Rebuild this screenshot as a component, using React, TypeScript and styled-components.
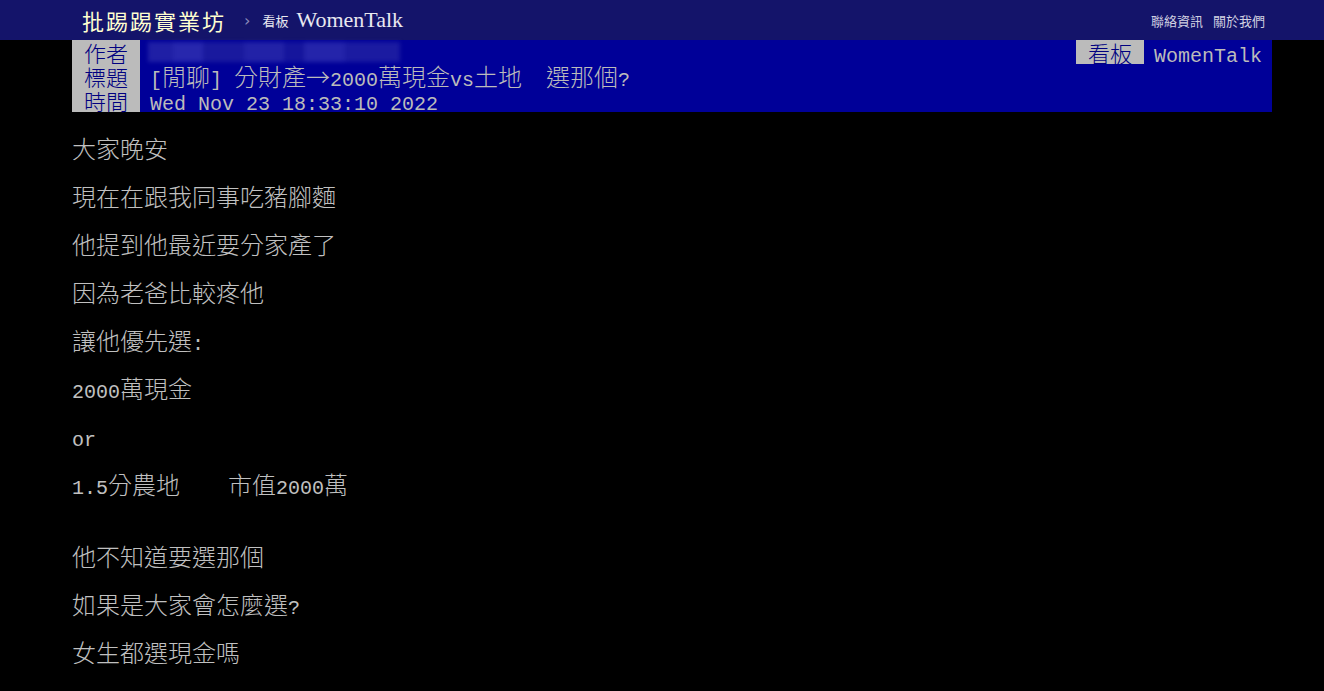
import React from 'react'
import styled, { createGlobalStyle } from 'styled-components'

const GlobalStyle = createGlobalStyle`
  html, body {
    margin: 0;
    padding: 0;
    background: #000;
  }
  body {
    font-family: "Noto Sans CJK TC", "Liberation Mono", sans-serif;
    color: #bbb;
  }
`

// split ascii runs so half-width chars get the 12px advance of the BBS grid
const renderText = (text: string) => {
  const parts = text.split(/([\x20-\x7e]+)/)
  return parts.map((p, i) =>
    /^[\x20-\x7e]+$/.test(p) ? <Half key={i}>{p}</Half> : p
  )
}

const Half = styled.span`
  font-family: "Liberation Mono", monospace;
  font-size: 20px;
  line-height: 24px;
  font-weight: 400;
  white-space: pre;
`

const TopBar = styled.div`
  height: 40px;
  background: #14146a;
  display: flex;
  align-items: center;
  padding: 0 59px 0 82px;
`

const SiteName = styled.span`
  font-family: "Noto Sans CJK TC", sans-serif;
  font-size: 22px;
  letter-spacing: 2px;
  color: #ffffd0;
  line-height: 40px;
`

const Crumb = styled.span`
  color: #8a8ab8;
  font-size: 16px;
  margin: 0 12px 0 18px;
  font-family: "DejaVu Sans", sans-serif;
`

const BoardTag = styled.span`
  font-family: "Noto Sans CJK TC", sans-serif;
  font-size: 13px;
  color: #e8e8f0;
  margin-right: 8px;
`

const BoardName = styled.span`
  font-family: "Liberation Serif", serif;
  font-size: 22px;
  color: #e8e8f0;
`

const TopLinks = styled.div`
  margin-left: auto;
  display: flex;
  gap: 10px;
  font-family: "Noto Sans CJK TC", sans-serif;
  font-size: 13px;
  color: #d0d0e0;
`

const Screen = styled.div`
  padding: 0 52px 0 72px;
  font-size: 24px;
  line-height: 24px;
`

const MetaRow = styled.div`
  display: flex;
  height: 24px;
  background: #000098;
`

const MetaLabel = styled.span`
  width: 68px;
  flex: none;
  background: #bbb;
  color: #000080;
  text-align: center;
  font-size: 22px;
  line-height: 24px;
  font-weight: 300;
`

const MetaValue = styled.span<{ $grow?: boolean }>`
  padding-left: 10px;
  color: #bbb;
  white-space: pre;
  font-weight: 300;
  flex: ${(p) => (p.$grow ? 1 : 'none')};
`

const SideValue = styled.span`
  padding: 0 10px;
  color: #bbb;
`

const Blurred = styled.div`
  width: 252px;
  height: 20px;
  margin: 2px 0 0 -2px;
  filter: blur(2px);
  opacity: 0.75;
  background: linear-gradient(
    90deg,
    #2a2aaa 0 10%,
    #3434b4 10% 22%,
    #2222a0 22% 38%,
    #2e2eac 38% 54%,
    #1c1c9e 54% 62%,
    #3030b0 62% 78%,
    #2424a4 78% 100%
  );
`

const Line = styled.div`
  height: 24px;
  white-space: pre;
  color: #c0c0c0;
  font-weight: 300;
`

const bodyLines = [
  '',
  '大家晚安',
  '',
  '現在在跟我同事吃豬腳麵',
  '',
  '他提到他最近要分家產了',
  '',
  '因為老爸比較疼他',
  '',
  '讓他優先選:',
  '',
  '2000萬現金',
  '',
  'or',
  '',
  '1.5分農地　　市值2000萬',
  '',
  '',
  '他不知道要選那個',
  '',
  '如果是大家會怎麼選?',
  '',
  '女生都選現金嗎',
]

export default function App() {
  return (
    <>
      <GlobalStyle />
      <TopBar>
        <SiteName>批踢踢實業坊</SiteName>
        <Crumb>›</Crumb>
        <BoardTag>看板</BoardTag>
        <BoardName>WomenTalk</BoardName>
        <TopLinks>
          <span>聯絡資訊</span>
          <span>關於我們</span>
        </TopLinks>
      </TopBar>
      <Screen>
        <MetaRow>
          <MetaLabel>作者</MetaLabel>
          <MetaValue $grow>
            <Blurred />
          </MetaValue>
          <MetaLabel>看板</MetaLabel>
          <SideValue>{renderText('WomenTalk')}</SideValue>
        </MetaRow>
        <MetaRow>
          <MetaLabel>標題</MetaLabel>
          <MetaValue $grow>{renderText('[閒聊] 分財產→2000萬現金vs土地　選那個?')}</MetaValue>
        </MetaRow>
        <MetaRow>
          <MetaLabel>時間</MetaLabel>
          <MetaValue $grow>{renderText('Wed Nov 23 18:33:10 2022')}</MetaValue>
        </MetaRow>
        {bodyLines.map((l, i) => (
          <Line key={i}>{renderText(l)}</Line>
        ))}
      </Screen>
    </>
  )
}
